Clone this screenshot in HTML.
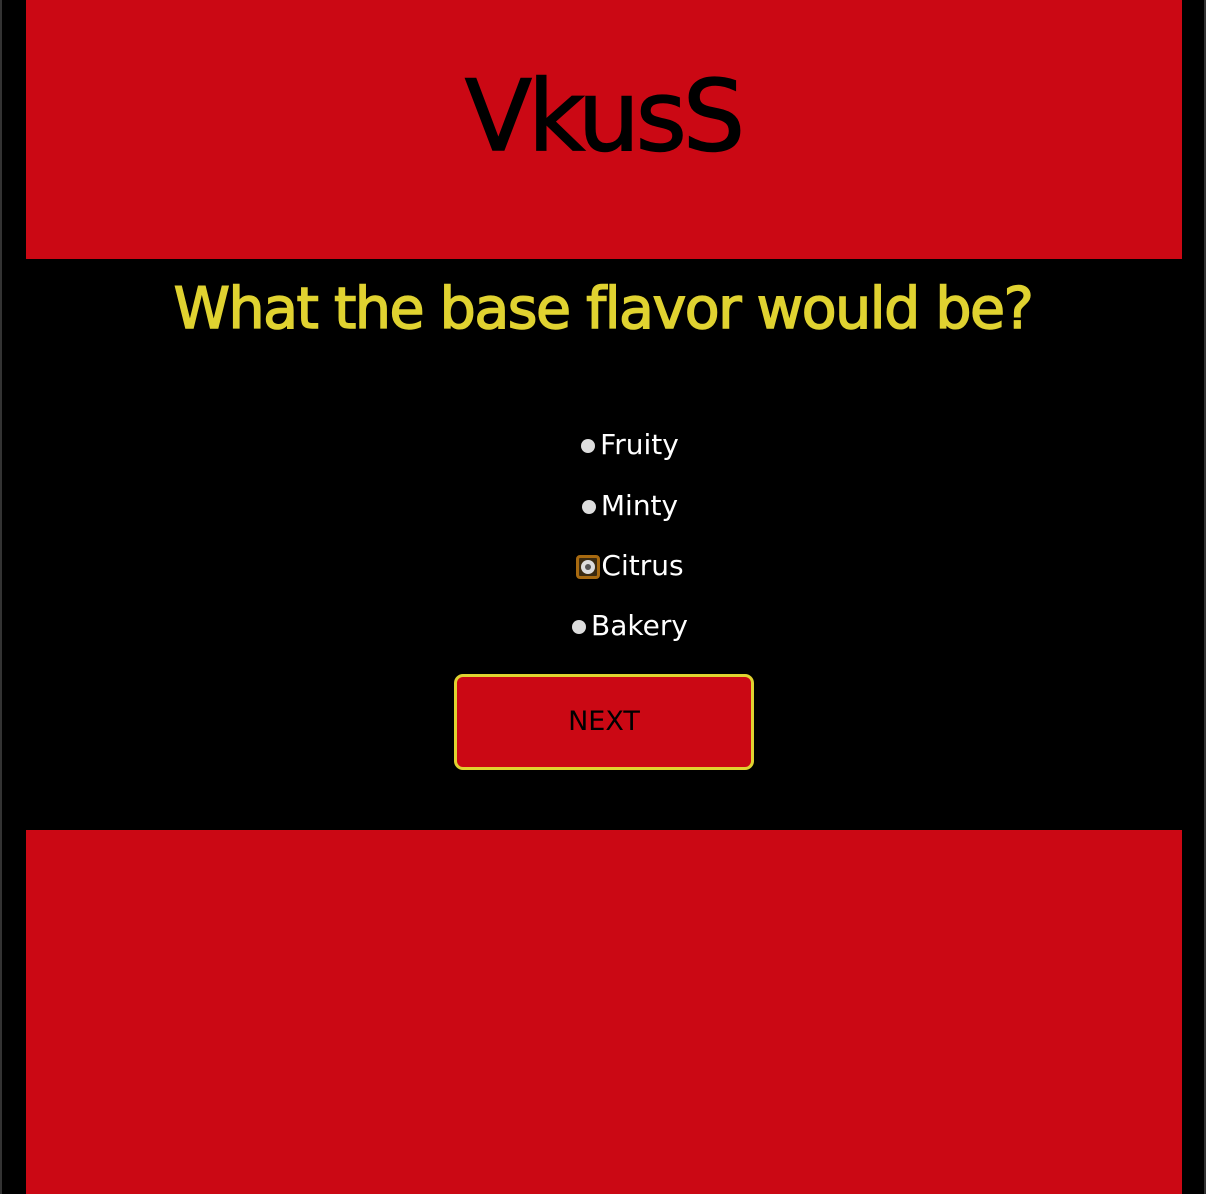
<html><head><style>
body{margin:0;width:1206px;height:1194px;background:#000;position:relative;overflow:hidden;font-family:"DejaVu Sans","Liberation Sans",sans-serif}
.lb{position:absolute;left:0;top:0;width:2px;height:1194px;background:#333}
.rb{position:absolute;right:0;top:0;width:2px;height:1194px;background:#333}
.top{position:absolute;left:26px;top:0;width:1156px;height:259px;background:#cb0814}
.bot{position:absolute;left:26px;top:830px;width:1156px;height:364px;background:#cb0814}
h1{position:absolute;left:0;width:1206px;top:60px;margin:0;text-align:center;font-size:98px;font-weight:normal;color:#000;letter-spacing:-4px;-webkit-text-stroke:1.5px #000}
h2{position:absolute;left:0;width:1206px;top:276px;margin:0;text-align:center;font-size:57px;font-weight:normal;color:#e0d230;letter-spacing:-1.5px;-webkit-text-stroke:1.5px #e0d230}
.opt{position:absolute;left:54px;width:1152px;text-align:center;color:#fff;font-size:28px}
.opt i{display:inline-block;width:14px;height:14px;border-radius:50%;background:#ddd;margin-right:5px;vertical-align:1px}
.sel{display:inline-block;width:24px;height:24px;border:3px solid #a86a10;border-radius:4px;box-sizing:border-box;vertical-align:-4px;margin-right:1px;position:relative;background:#3a2a10}
.sel:after{content:"";position:absolute;left:2px;top:2px;width:14px;height:14px;border-radius:50%;background:#ddd}
.sel b{position:absolute;left:6px;top:6px;width:6px;height:6px;border-radius:50%;background:#555;z-index:1}
.btn{position:absolute;left:454px;top:674px;width:300px;height:96px;box-sizing:border-box;border:3px solid #e0d230;border-radius:9px;background:#cb0814;color:#000;font-size:27px;text-align:center;line-height:90px}
</style></head><body>
<div class="lb"></div><div class="rb"></div>
<div class="top"></div><div class="bot"></div>
<h1>VkusS</h1>
<h2>What the base flavor would be?</h2>
<div class="opt" style="top:428px"><i></i>Fruity</div>
<div class="opt" style="top:489px"><i></i>Minty</div>
<div class="opt" style="top:549px"><span class="sel"><b></b></span>Citrus</div>
<div class="opt" style="top:609px"><i></i>Bakery</div>
<div class="btn">NEXT</div>
</body></html>
